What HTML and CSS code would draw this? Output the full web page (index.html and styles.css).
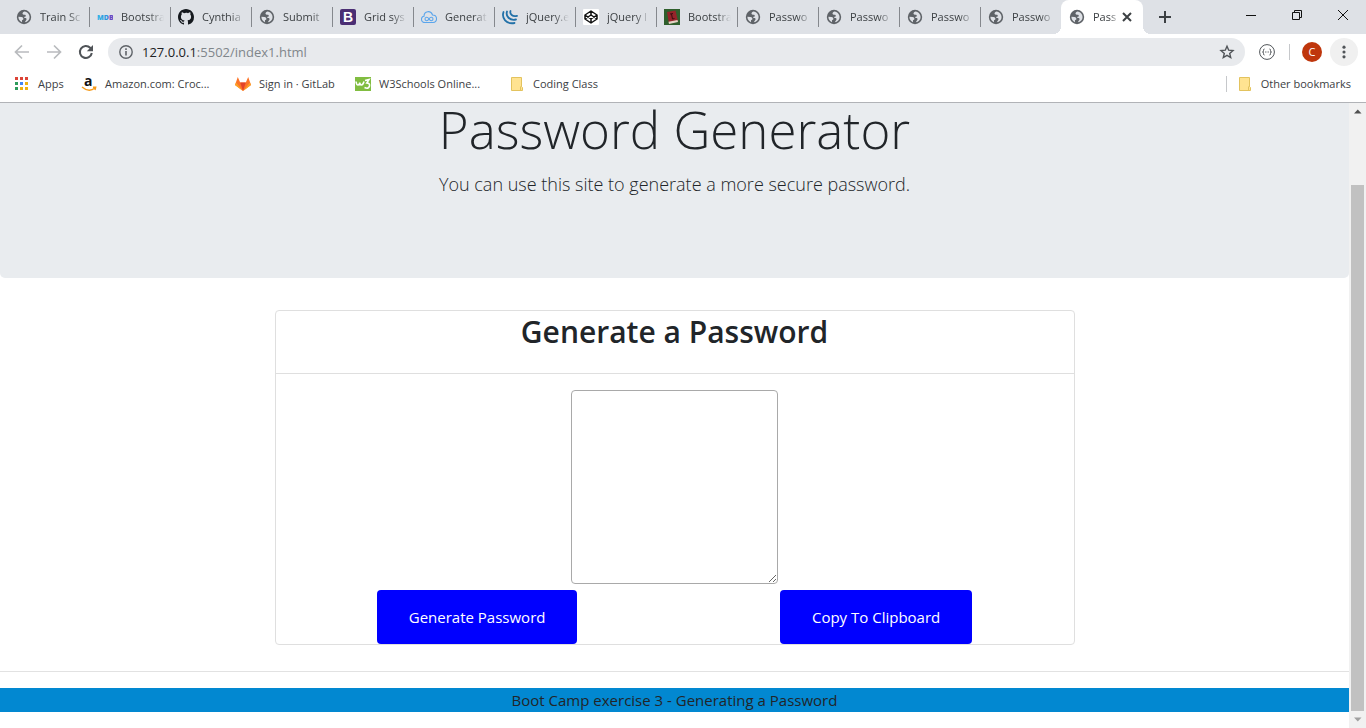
FILE: index.html
```html
<!DOCTYPE html>
<html lang="en">
<head>
<meta charset="utf-8">
<title>Password Generator</title>
<link rel="stylesheet" href="styles.css">
</head>
<body>
<svg class="defs" aria-hidden="true">
  <linearGradient id="mdb-fill"><stop offset="0" stop-color="#33b5e5"/><stop offset=".62" stop-color="#2a92e0"/><stop offset=".66" stop-color="#6847c2"/></linearGradient>
  <symbol id="globe" viewBox="0 0 16 16">
    <circle cx="8" cy="8" r="7.200" fill="#5f6368"/>
    <path d="M8.200 2.400C6.300 3.200 6 4.900 7.200 5.600C8.200 6.100 9 5.500 9.600 6.200C10.200 7 9.600 7.600 8.600 7.800C7.900 8.100 8 8.900 8.900 9C10.300 9 10.900 9.700 10.400 10.700L8.800 13.300C11.700 13 13.600 10.800 13.600 8C13.500 5.600 11.900 3.500 9.700 2.700Z" fill="#dee1e6"/>
    <path d="M2.400 7.800L5.500 8C7 8.300 7.700 9.300 7.300 10.400L6 11.200V13.200C3.800 12.300 2.300 10.300 2.400 7.800Z" fill="#dee1e6"/>
  </symbol>
  <symbol id="folder" viewBox="0 0 14 16">
    <path d="M1.500 1.500h10v9l1 1v3h-11z" fill="#ffe391" stroke="#e3c35e"/>
    <path d="M10.500 14v-3l1-1" fill="none" stroke="#e3c35e"/>
  </symbol>
</svg>

<header class="browser">
  <div class="tabstrip">
    <nav class="tabs" aria-label="Tabs">
      <a class="tab" href="#"><svg class="icon"><use href="#globe"/></svg><span class="tab-title">Train Sc</span></a>
      <a class="tab" href="#"><svg class="icon" viewBox="0 0 16 16"><text class="mdb" x="0" y="11" fill="url(#mdb-fill)">MDB</text></svg><span class="tab-title">Bootstra</span></a>
      <a class="tab" href="#"><svg class="icon" viewBox="0 0 16 16"><path fill="#15191e" d="M8 0C3.580 0 0 3.580 0 8c0 3.540 2.290 6.530 5.470 7.590.4.070.55-.17.55-.38 0-.19-.01-.82-.01-1.490-2.010.37-2.530-.49-2.690-.94-.09-.23-.48-.94-.82-1.130-.28-.15-.68-.52-.01-.53.63-.01 1.080.58 1.230.82.72 1.210 1.870.87 2.330.66.07-.52.28-.87.51-1.070-1.780-.2-3.640-.89-3.640-3.950 0-.87.31-1.590.82-2.150-.08-.2-.36-1.020.08-2.120 0 0 .67-.21 2.200.82A7.600 7.600 0 0 1 8 3.860c.68 0 1.360.09 2 .27 1.530-1.040 2.200-.82 2.200-.82.44 1.100.16 1.920.08 2.120.51.56.82 1.270.82 2.150 0 3.070-1.870 3.750-3.650 3.950.29.25.54.73.54 1.480 0 1.070-.01 1.930-.01 2.200 0 .21.15.46.55.38A8 8 0 0 0 16 8c0-4.420-3.580-8-8-8z"/></svg><span class="tab-title">Cynthia</span></a>
      <a class="tab" href="#"><svg class="icon"><use href="#globe"/></svg><span class="tab-title">Submit</span></a>
      <a class="tab" href="#"><svg class="icon" viewBox="0 0 16 16"><rect width="16" height="16" rx="2" fill="#4b2e74"/><text class="bs" x="3" y="13" fill="#fff">B</text></svg><span class="tab-title">Grid sys</span></a>
      <a class="tab" href="#"><svg class="icon" viewBox="0 0 16 16" fill="none" stroke="#5aa5ec" stroke-width="1.100"><path d="M4 13.500C-.5 13.500-.5 7.500 3 7.300C3 1.500 10 1.200 11.500 6C16.800 6 16.800 13.500 12 13.500Z"/><path d="M8 10C6.500 7.500 4 8 4 10S6.500 12.500 8 10S12 8 12 10S9.500 12.500 8 10Z"/></svg><span class="tab-title">Generat</span></a>
      <a class="tab" href="#"><svg class="icon" viewBox="0 0 16 16" fill="none" stroke="#2271a8" stroke-width="1.800" stroke-linecap="round"><path d="M1.500 3C-.5 9 4 15.500 12.500 14"/><path d="M5 2.500C3.500 7 7.500 12 14 10.500"/><path d="M8.500 2C7.500 5 10.500 8 15 6.800"/></svg><span class="tab-title">jQuery.e</span></a>
      <a class="tab" href="#"><svg class="icon" viewBox="0 0 16 16"><rect width="16" height="16" rx="1" fill="#fff"/><path d="M8 2L14 6V10L8 14L2 10V6ZM2 6L8 10L14 6M2 10L8 6L14 10M8 2V6M8 10V14" fill="none" stroke="#111" stroke-width="1.500" stroke-linejoin="round"/></svg><span class="tab-title">jQuery I</span></a>
      <a class="tab" href="#"><svg class="icon" viewBox="0 0 16 16"><rect width="16" height="16" fill="#2f5f2c"/><path d="M3 3L11.500 1.500L14 12.500L5 14.500Z" fill="#96242a"/><path d="M4.500 12.800L13.500 11L14 13L5 15Z" fill="#e3d5c5"/><path d="M6 5l3-.5M7.500 5l1 5 2-.5" fill="none" stroke="#3d0b10"/></svg><span class="tab-title">Bootstra</span></a>
      <a class="tab" href="#"><svg class="icon"><use href="#globe"/></svg><span class="tab-title">Passwo</span></a>
      <a class="tab" href="#"><svg class="icon"><use href="#globe"/></svg><span class="tab-title">Passwo</span></a>
      <a class="tab" href="#"><svg class="icon"><use href="#globe"/></svg><span class="tab-title">Passwo</span></a>
      <a class="tab tab-last" href="#"><svg class="icon"><use href="#globe"/></svg><span class="tab-title">Passwo</span></a>
      <div class="tab tab-active"><svg class="icon"><use href="#globe"/></svg><span class="tab-title">Pass</span><button class="close" aria-label="Close tab"><svg viewBox="0 0 16 16"><path d="M4 4l8 8M12 4l-8 8" stroke="#3c4043" stroke-width="2"/></svg></button></div>
    </nav>
    <button class="new-tab" aria-label="New tab"><svg viewBox="0 0 16 16"><path d="M8 2v12M2 8h12" stroke="#3c4043" stroke-width="2"/></svg></button>
    <div class="window-controls">
      <button aria-label="Minimize"><svg viewBox="0 0 12 12"><path d="M1 6.500h10" stroke="#111"/></svg></button>
      <button aria-label="Restore"><svg viewBox="0 0 12 12"><path d="M1.500 3.500h7v7h-7zM3.500 3V1.500h7v7H9" fill="none" stroke="#111"/></svg></button>
      <button aria-label="Close"><svg viewBox="0 0 12 12"><path d="M1 1l10 10M11 1L1 11" stroke="#111"/></svg></button>
    </div>
  </div>

  <div class="toolbar">
    <button class="tool" aria-label="Back"><svg viewBox="0 0 16 16"><path d="M15 8H2M8 1.500L1.500 8L8 14.500" fill="none" stroke="#b9bbbe" stroke-width="1.700"/></svg></button>
    <button class="tool" aria-label="Forward"><svg viewBox="0 0 16 16"><path d="M1 8h13M8 1.500L14.500 8L8 14.500" fill="none" stroke="#b9bbbe" stroke-width="1.700"/></svg></button>
    <button class="tool" aria-label="Reload"><svg viewBox="0 0 16 16"><path d="M13.800 9A6 6 0 1 1 12.200 3.800L13.500 5.200" fill="none" stroke="#505458" stroke-width="2"/><path d="M15 1v6.200H8.800z" fill="#505458"/></svg></button>
    <div class="omnibox">
      <svg class="info" viewBox="0 0 16 16"><circle cx="8" cy="8" r="6.200" fill="none" stroke="#5f6368" stroke-width="1.400"/><path d="M8 7v4.500M8 4.300v1.600" stroke="#5f6368" stroke-width="1.600"/></svg>
      <p class="url"><span class="host">127.0.0.1</span>:5502/index1.html</p>
      <button class="star" aria-label="Bookmark this page"><svg viewBox="0 0 16 16"><path d="M8 2.200L9.700 6.200L14 6.600L10.700 9.400L11.700 13.600L8 11.300L4.300 13.600L5.300 9.400L2 6.600L6.300 6.200Z" fill="none" stroke="#505458" stroke-width="1.400"/></svg></button>
    </div>
    <button class="extension" aria-label="Extension"><svg viewBox="0 0 16 16" fill="none" stroke="#505458"><circle cx="8" cy="8" r="7.400"/><path d="M5.500 5Q4.300 5 4.500 6.500Q4.700 8 3.500 8Q4.700 8 4.500 9.500Q4.300 11 5.500 11M10.500 5Q11.700 5 11.500 6.500Q11.300 8 12.500 8Q11.300 8 11.500 9.500Q11.700 11 10.500 11M6.200 8h.8M7.600 8h.8M9 8h.8"/></svg></button>
    <span class="divider"></span>
    <button class="avatar">C</button>
    <button class="menu" aria-label="Menu"><svg viewBox="0 0 16 16" fill="#505458"><circle cx="8" cy="2.500" r="1.800"/><circle cx="8" cy="8" r="1.800"/><circle cx="8" cy="13.500" r="1.800"/></svg></button>
  </div>

  <nav class="bookmarks" aria-label="Bookmarks">
    <a href="#"><svg class="icon" viewBox="0 0 16 16"><path d="M1 1h3v3H1zM6 1h3v3H6zM11 1h3v3h-3z" fill="#dc4437"/><path d="M1 6h3v3H1zM1 11h3v3H1z" fill="#2d9b5b"/><path d="M6 6h3v3H6z" fill="#4285f4"/><path d="M11 6h3v3h-3zM6 11h3v3H6zM11 11h3v3h-3z" fill="#efb10f"/></svg>Apps</a>
    <a href="#"><svg class="icon amazon" viewBox="0 0 16 16"><text class="amz" x="3" y="10" fill="#111">a</text><path d="M1 11Q8 17 14 12M12 11.200L14.700 11.200L14 14" fill="none" stroke="#f59b1b" stroke-width="1.400"/></svg>Amazon.com: Croc...</a>
    <a href="#"><svg class="icon" viewBox="0 0 16 16"><path d="M8 15L0 9L2.800 1L5.200 6.500H10.800L13.200 1L16 9Z" fill="#fc7428"/><path d="M8 15L5.200 6.500H10.800Z" fill="#e24329"/><path d="M8 15L0 9L1 6.500ZM8 15L16 9L15 6.500Z" fill="#fca326"/></svg>Sign in · GitLab</a>
    <a href="#"><svg class="icon" viewBox="0 0 16 16"><rect y="1" width="16" height="14" fill="#81bd41"/><path d="M1 5.500Q1.500 9 3 9Q4.500 9 4.700 6.500Q5 9 6.500 9Q8 9 9 5.500M10 4.500L14 3.500L11.800 7Q15 7 14.500 10Q13.500 13.500 9.500 11.500" fill="none" stroke="#fff" stroke-width="1.600"/></svg>W3Schools Online...</a>
    <a href="#"><svg class="icon"><use href="#folder"/></svg>Coding Class</a>
    <a class="other" href="#"><svg class="icon"><use href="#folder"/></svg>Other bookmarks</a>
  </nav>
</header>

<div class="viewport">
  <main class="page">
    <section class="jumbotron">
      <h1>Password Generator</h1>
      <p>You can use this site to generate a more secure password.</p>
    </section>
    <section class="card">
      <h2>Generate a Password</h2>
      <div class="card-body">
        <textarea class="result" aria-label="Generated password"></textarea>
        <div class="actions">
          <button class="btn">Generate Password</button>
          <button class="btn">Copy To Clipboard</button>
        </div>
      </div>
    </section>
    <hr>
    <footer>Boot Camp exercise 3 - Generating a Password</footer>
  </main>
  <div class="scrollbar" aria-hidden="true">
    <svg viewBox="0 0 17 17"><path d="M5 10.500h7.500L8.800 6.500z" fill="#505050"/></svg>
    <span class="track"><span class="thumb"></span></span>
    <svg viewBox="0 0 17 17"><path d="M5 6.500h7.500L8.800 10.500z" fill="#a0a0a0"/></svg>
  </div>
</div>
</body>
</html>
```

FILE: styles.css
```css
* { box-sizing: border-box; }

body {
  margin: 0;
  height: 100vh;
  display: flex;
  flex-direction: column;
  overflow: hidden;
  background: #fff;
  color: #212529;
  font: 16px/24px "Open Sans", "Noto Sans", sans-serif;
}

button { border: 0; padding: 0; background: none; font: inherit; color: inherit; }
a { color: inherit; text-decoration: none; }
svg { display: block; }
.defs { position: absolute; width: 0; height: 0; }
.icon { width: 16px; height: 16px; flex: none; }
.amazon { overflow: visible; }

.browser { flex: none; font-size: 11px; line-height: 16px; color: #3c4043; border-bottom: 1px solid #b1b3b7; }

/* Tab strip */
.tabstrip { display: flex; height: 34px; background: #dee1e6; padding-left: 8px; }
.tabs { display: flex; }
.tab { display: flex; align-items: center; gap: 8px; width: 81px; padding: 0 6px 0 8px; position: relative; }
.tab::after { content: ""; position: absolute; right: -1px; top: 7px; height: 20px; width: 1px; background: #85888d; }
.tab-last::after { display: none; }
.tab-title {
  flex: 1;
  min-width: 0;
  white-space: nowrap;
  -webkit-mask-image: linear-gradient(to right, #000 65%, transparent);
  mask-image: linear-gradient(to right, #000 65%, transparent);
}
.tab-active { width: 82px; padding-right: 8px; background: #fff; border-radius: 8px 8px 0 0; }
.tab-active .tab-title { margin-right: -8px; }
.tab-active::before,
.tab-active::after {
  content: "";
  position: absolute;
  top: auto;
  bottom: 0;
  width: 8px;
  height: 8px;
}
.tab-active::before { right: 100%; background: radial-gradient(circle at 0 0, #dee1e6 8px, #fff 8px); }
.tab-active::after { left: 100%; background: radial-gradient(circle at 100% 0, #dee1e6 8px, #fff 8px); }
.close, .close svg { width: 16px; height: 16px; flex: none; }
.new-tab { padding: 0 14px; }
.new-tab svg { width: 16px; height: 16px; }
.window-controls { display: flex; margin-left: auto; height: 29px; }
.window-controls button { width: 46px; display: flex; align-items: center; justify-content: center; }
.window-controls svg { width: 12px; height: 12px; }

.mdb { font: 800 7px "Open Sans", sans-serif; }
.bs { font: bold 14px "Liberation Sans", sans-serif; }
.amz { font: bold 14px "Open Sans", sans-serif; }

/* Toolbar */
.toolbar { display: flex; align-items: center; height: 36px; padding: 0 8px 0 7px; background: #fff; }
.tool { width: 32px; padding: 0 7px; }
.tool svg { width: 16px; height: 16px; }
.omnibox { flex: 1; display: flex; align-items: center; height: 28px; margin-left: 5px; padding: 0 10px; border-radius: 14px; background: #e8eaed; }
.info { width: 16px; height: 16px; }
.url { margin: 0 auto 0 8px; font-size: 13px; color: #80868b; }
.host { color: #202124; }
.star svg { width: 16px; height: 16px; }
.extension { margin-left: 14px; }
.extension svg { width: 16px; height: 16px; }
.divider { width: 1px; height: 16px; margin: 0 12px 0 14px; background: #c6c8cb; }
.avatar { width: 20px; height: 20px; border-radius: 50%; background: #bf360c; color: #fff; line-height: 20px; }
.menu { width: 28px; height: 28px; margin-left: 8px; border-radius: 50%; background: #f0f0f0; display: flex; align-items: center; justify-content: center; }
.menu svg { width: 14px; height: 14px; }

/* Bookmarks bar */
.bookmarks { display: grid; grid-template-columns: 67px 154px 120px 154px 100px 1fr; align-items: center; height: 32px; padding: 0 15px 4px 14px; }
.bookmarks a { display: flex; align-items: center; gap: 8px; white-space: nowrap; }
.other { justify-self: end; padding-left: 10px; border-left: 1px solid #c6c8cb; }

/* Page area */
.viewport { flex: 1; min-height: 0; display: flex; }
.page { flex: 1; overflow: hidden; text-align: center; }
.jumbotron { padding-bottom: 79px; background: #e9ecef; border-radius: 0 0 5px 5px; }
.jumbotron h1 { margin: 0 0 14px; font-size: 51px; font-weight: 300; line-height: 52px; }
.jumbotron p { margin: 0; font-size: 18px; font-weight: 300; line-height: 30px; }
.card { max-width: 800px; margin: 32px auto 26px; border: 1px solid #dfdfdf; border-radius: 4px; }
.card h2 { margin: 0; padding-bottom: 20px; font-size: 30px; font-weight: 600; line-height: 42px; border-bottom: 1px solid #dfdfdf; }
.card-body { padding-top: 16px; }
.result { display: block; width: 207px; height: 194px; margin: 0 auto 6px; border: 1px solid #a9a9a9; border-radius: 4px; }
.actions { display: flex; justify-content: space-around; }
.btn { padding: 15px 32px; border-radius: 4px; background: #00f; color: #fff; font-size: 15px; }
hr { margin: 0 0 16px; border: 0; border-top: 1px solid #e2e2e2; }
footer { background: #0288d1; font-size: 15px; }

/* Scrollbar */
.scrollbar { flex: none; display: flex; flex-direction: column; width: 17px; background: #f1f1f1; }
.scrollbar svg { width: 17px; height: 17px; }
.track { flex: 1; display: flex; flex-direction: column; justify-content: flex-end; padding: 0 2px; }
.thumb { height: 89%; background: #c1c1c1; }
```
